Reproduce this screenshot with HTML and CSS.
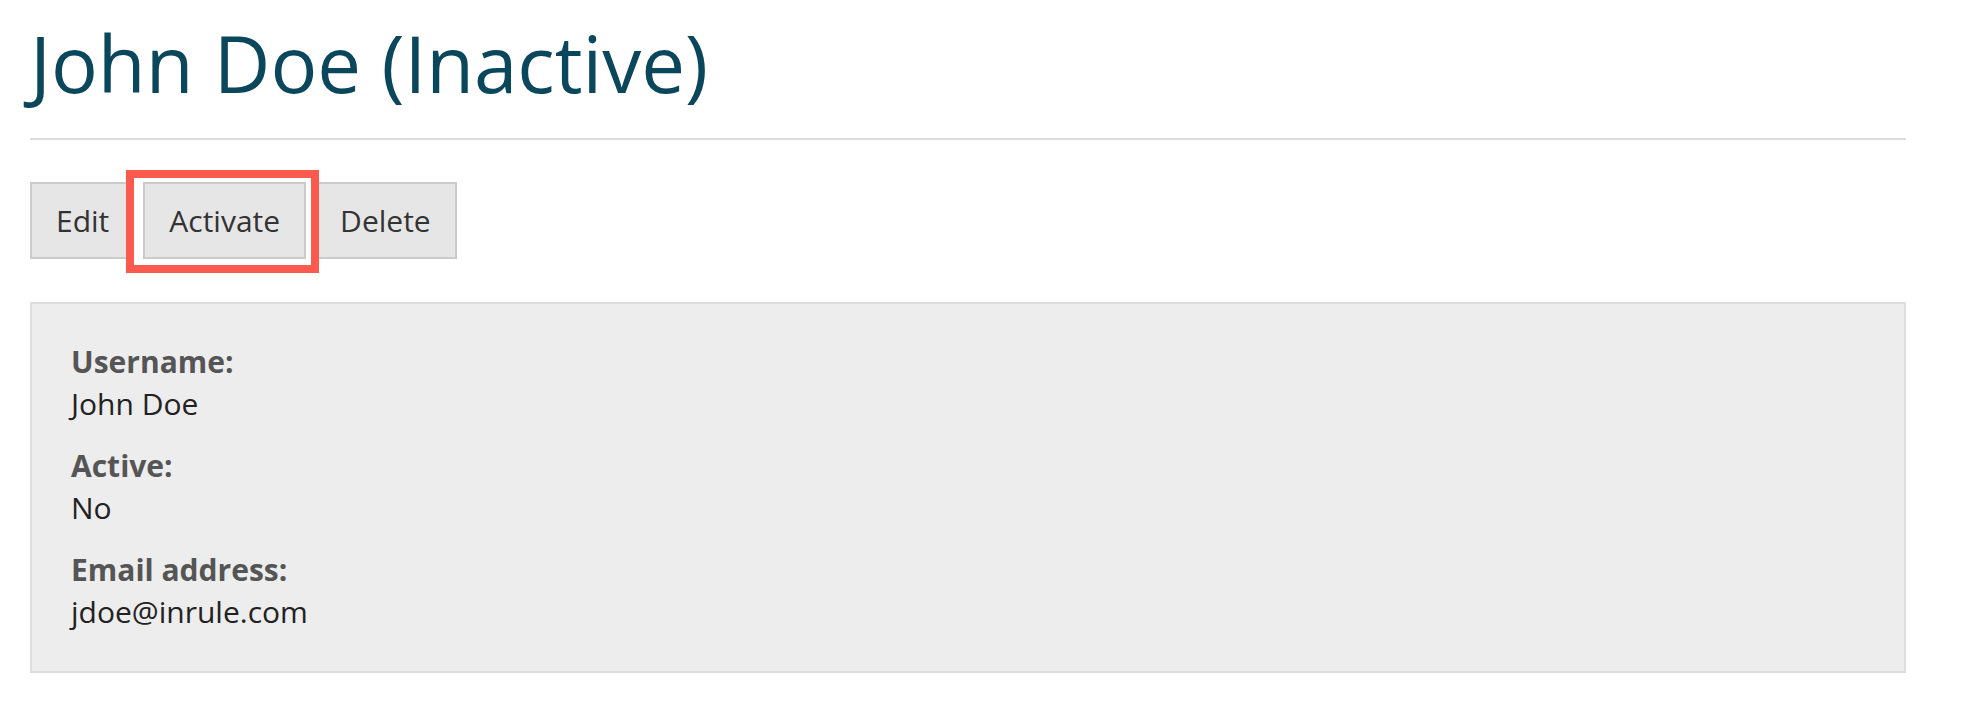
FILE: index.html
```html
<!DOCTYPE html>
<html lang="en">
<head>
<meta charset="utf-8">
<title>John Doe (Inactive)</title>
<link rel="stylesheet" href="styles.css">
</head>
<body>
<main class="page">
  <h1 class="title">John Doe (Inactive)</h1>
  <div class="actions">
    <button class="btn">Edit</button>
    <span class="highlight"><button class="btn">Activate</button></span>
    <button class="btn">Delete</button>
  </div>
  <section class="details">
    <div class="field">
      <div class="label">Username:</div>
      <div class="value">John Doe</div>
    </div>
    <div class="field">
      <div class="label">Active:</div>
      <div class="value">No</div>
    </div>
    <div class="field">
      <div class="label">Email address:</div>
      <div class="value">jdoe@inrule.com</div>
    </div>
  </section>
</main>
</body>
</html>
```

FILE: styles.css
```css
html, body {
  margin: 0;
  padding: 0;
  background: #ffffff;
}

body {
  font-family: "Open Sans", "Noto Sans", sans-serif;
  color: #222222;
}

.page {
  width: 1876px;
  padding: 19px 0 0 30px;
}

.title {
  margin: 0;
  padding-bottom: 31px;
  border-bottom: 2px solid #dcdcdc;
  font-size: 78px;
  line-height: 88px;
  font-weight: 400;
  color: #0b475c;
}

.actions {
  display: flex;
  gap: 8px;
  margin-top: 42px;
}

.btn {
  font-family: "Open Sans", "Noto Sans", sans-serif;
  font-size: 30px;
  line-height: 42px;
  color: #333333;
  background: #e6e6e6;
  border: 2px solid #cbcbcb;
  border-radius: 0;
  padding: 15.5px 24px;
  margin: 0;
  position: relative;
  z-index: 1;
}

.highlight {
  position: relative;
  display: flex;
}

.highlight::before {
  content: "";
  position: absolute;
  left: -17px;
  right: -13px;
  top: -12px;
  bottom: -14px;
  background: #ffffff;
  border: 8px solid #fc5a4e;
  z-index: 2;
}

.highlight .btn {
  z-index: 3;
}

.details {
  margin-top: 43px;
  background: #ededed;
  border: 2px solid #dddddd;
  padding: 37px 39px 38px;
  display: flex;
  flex-direction: column;
  gap: 20px;
}

.label {
  font-size: 30px;
  line-height: 42px;
  font-weight: 700;
  color: #555555;
}

.value {
  font-size: 30px;
  line-height: 42px;
  color: #222222;
}
```
